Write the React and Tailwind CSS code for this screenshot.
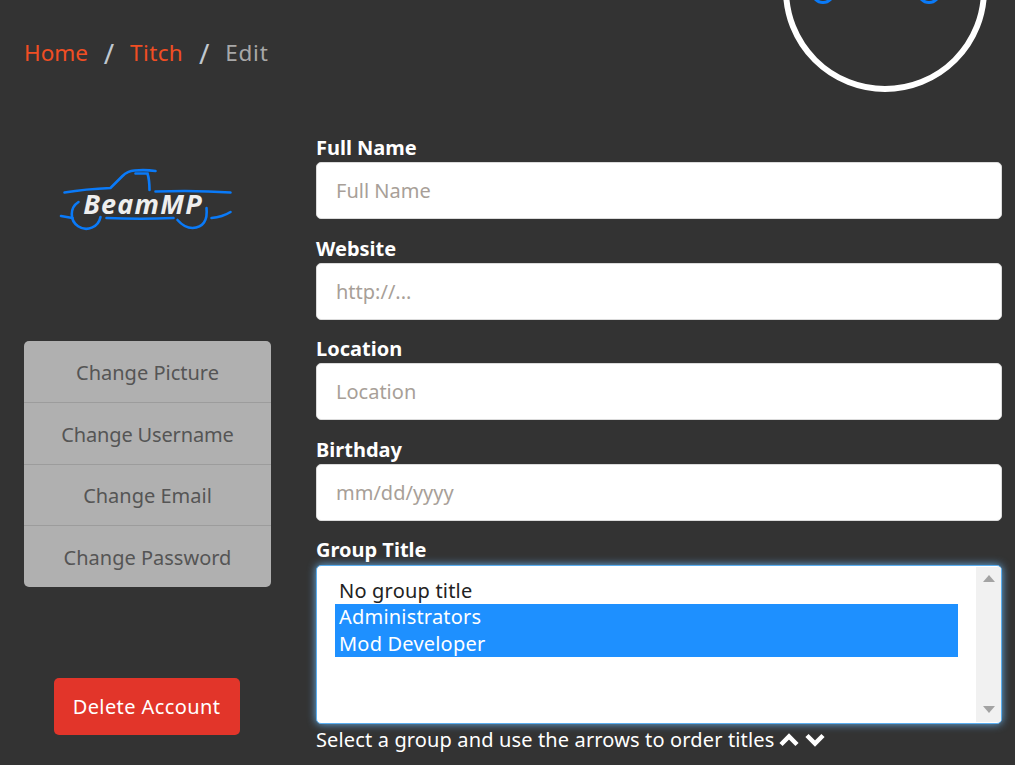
import React from 'react';

function Logo() {
  return (
    <svg width="180" height="75" viewBox="57.5 160 180 75" fill="none" stroke="#0a7af8" strokeWidth="2.6" strokeLinecap="round">
      <path d="M64 192.5 Q85 189 110 188 L122 176 Q127 171 134 170.5 Q145 169.5 155 171" />
      <path d="M135 173.5 L147 173.5 Q149 180 149 190" />
      <path d="M155 191.5 Q195 190 230 192.5" />
      <path d="M60.5 216 L72 218" />
      <path d="M78 202 A14.5 14.5 0 1 0 100 217" />
      <path d="M106 218 Q140 219.5 173 218" />
      <path d="M177 220 Q184 228 192 228 Q208 227 206 208" />
      <path d="M211 218 Q222 217 230 212" />
      <text x="142.5" y="213.5" textAnchor="middle" fill="#eeeeee" stroke="none" fontFamily="'Open Sans', sans-serif" fontStyle="italic" fontWeight="700" fontSize="27" letterSpacing="1.2">BeamMP</text>
    </svg>
  );
}

function Chevron({ down }) {
  return (
    <svg width="20" height="14" viewBox="0 0 20 14" fill="none" stroke="currentColor" strokeWidth="4.5">
      <path d={down ? 'M2 2.5 L10 10.5 L18 2.5' : 'M2 11.5 L10 3.5 L18 11.5'} />
    </svg>
  );
}

function Field({ label, placeholder }) {
  return (
    <div>
      <label className="block pt-[2px] text-[20px] leading-[28px] font-bold text-white">{label}</label>
      <input
        placeholder={placeholder}
        className="block w-full h-[57px] px-[19px] bg-white rounded-[5px] border border-[#dbdbdb] text-[20px] placeholder:text-[#a89f98] outline-none"
      />
    </div>
  );
}

export default function App() {
  return (
    <div className="relative h-[765px] w-[1015px] overflow-hidden bg-[#333333] font-['Noto_Sans',sans-serif]">
      <div className="absolute left-[783px] top-[-112px] w-[204px] h-[204px] rounded-full border-[6px] border-white">
        <div className="absolute left-[22px] top-[86px] w-[24px] h-[24px] rounded-full border-[3px] border-[#0a7af8]" />
        <div className="absolute left-[128px] top-[86px] w-[24px] h-[24px] rounded-full border-[3px] border-[#0a7af8]" />
      </div>

      <div className="flex items-center h-[30px] mt-[38px] ml-[24px] text-[22.5px]">
        <span className="text-[#f04e23]">Home</span>
        <span className="w-[42px] text-center text-[28px] text-[#c0c8d0]">/</span>
        <span className="text-[#f04e23] tracking-[0.4px]">Titch</span>
        <span className="w-[42px] text-center text-[28px] text-[#c0c8d0]">/</span>
        <span className="text-[#a8a8a8] tracking-[0.8px]">Edit</span>
      </div>

      <div className="flex mt-[64px] pr-[13px]">
        <div className="w-[316px] pl-[24px] pr-[45px] shrink-0 flex flex-col">
          <div className="h-[209px] flex justify-center pt-[28px]">
            <div><Logo /></div>
          </div>
          <div className="rounded-[5px] bg-[#b0b0b0] text-[#555555] text-[20px] text-center overflow-hidden">
            <div className="h-[62px] pt-[2px] flex items-center justify-center border-b border-[#9c9c9c]">Change Picture</div>
            <div className="h-[62px] pt-[2px] flex items-center justify-center border-b border-[#9c9c9c] tracking-[-0.15px]">Change Username</div>
            <div className="h-[61px] pt-[2px] flex items-center justify-center border-b border-[#9c9c9c]">Change Email</div>
            <div className="h-[61px] pt-[2px] flex items-center justify-center">Change Password</div>
          </div>
          <div className="flex justify-center mt-[91px] pr-[2px]">
            <button className="w-[186px] h-[57px] rounded-[5px] bg-[#e2352a] text-white text-[20px] tracking-[0.4px]">Delete Account</button>
          </div>
        </div>

        <div className="flex-1 flex flex-col gap-[13.7px]">
          <Field label="Full Name" placeholder="Full Name" />
          <Field label="Website" placeholder="http://..." />
          <Field label="Location" placeholder="Location" />
          <Field label="Birthday" placeholder="mm/dd/yyyy" />
          <div>
            <label className="block text-[20px] leading-[30px] font-bold text-white">Group Title</label>
            <div className="flex h-[159px] bg-white rounded-[5px] border border-[#5aaef0] shadow-[0_0_8px_#66afe9] overflow-hidden">
              <div className="flex-1 pl-[18px] pr-[18px] pt-[12px] text-[20px] leading-[26.5px] tracking-[0.2px] text-[#222]">
                <div className="px-[4px]">No group title</div>
                <div className="px-[4px] bg-[#1e90ff] text-white">Administrators</div>
                <div className="px-[4px] bg-[#1e90ff] text-white">Mod Developer</div>
              </div>
              <div className="w-[25px] my-[1px] bg-[#f1f1f1] flex flex-col justify-between items-center pt-[8px] pb-[9px]">
                <div className="w-0 h-0 border-x-[6px] border-x-transparent border-b-[7px] border-b-[#a3a3a3]" />
                <div className="w-0 h-0 border-x-[6px] border-x-transparent border-t-[7px] border-t-[#a3a3a3]" />
              </div>
            </div>
            <div className="flex items-center text-[20px] leading-[32px] tracking-[0.14px] text-white">
              Select a group and use the arrows to order titles
              <span className="ml-[5px]"><Chevron /></span>
              <span className="ml-[6px]"><Chevron down /></span>
            </div>
          </div>
        </div>
      </div>
    </div>
  );
}
